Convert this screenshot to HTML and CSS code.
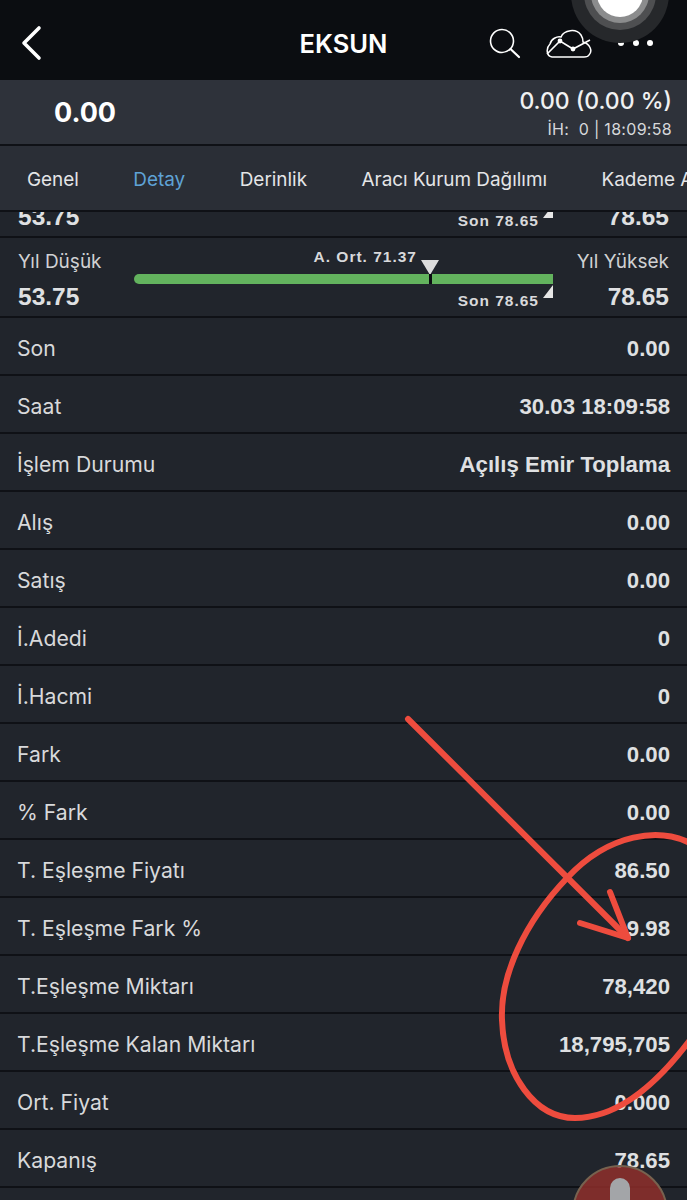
FILE: index.html
```html
<!DOCTYPE html>
<html lang="tr">
<head>
<meta charset="utf-8">
<title>EKSUN</title>
<link rel="stylesheet" href="styles.css">
</head>
<body>
<div class="screen">
  <header class="topbar">
    <svg class="back" width="24" height="36" viewBox="0 0 24 36"><path d="M19 3 L4 18 L19 33" fill="none" stroke="#fff" stroke-width="3.6" stroke-linecap="round" stroke-linejoin="round"/></svg>
    <h1 class="title">EKSUN</h1>
    <div class="actions">
      <svg width="34" height="32" viewBox="0 0 34 32"><circle cx="14" cy="13" r="11.5" fill="none" stroke="#fff" stroke-width="1.6"/><path d="M22.5 21 L31 29" stroke="#fff" stroke-width="2.2" stroke-linecap="round"/></svg>
      <svg width="46" height="32" viewBox="0 0 46 32"><path d="M6 29 C0 28 0 20 4 16 C5 11 11 8 15 9 C18 2 30 0 35 7 C37 10 37 12 37 14 C44 16 47 23 43 27 C42 29 40 29 38 29 Z" fill="none" stroke="#fff" stroke-width="1.5"/><path d="M1 26 L14 13 L27 21 L44 12" fill="none" stroke="#fff" stroke-width="1.6"/><circle cx="14" cy="13" r="2.4" fill="#fff"/><circle cx="27" cy="21" r="2.4" fill="#fff"/></svg>
      <div class="dots"><i></i><i></i><i></i></div>
    </div>
  </header>

  <section class="quote">
    <div class="price">0.00</div>
    <div class="quote-side">
      <div class="change">0.00 (0.00 %)</div>
      <div class="meta">İH:&nbsp; 0 | 18:09:58</div>
    </div>
  </section>

  <nav class="tabs">
    <span class="tab">Genel</span>
    <span class="tab active">Detay</span>
    <span class="tab">Derinlik</span>
    <span class="tab">Aracı Kurum Dağılımı</span>
    <span class="tab">Kademe Analizi</span>
  </nav>

  <main class="viewport">
    <div class="list">
      <div class="range">
        <div class="range-end"><span class="range-label"></span><b class="range-val">53.75</b></div>
        <div class="track">
          <span class="last">Son 78.65</span><span class="tri-corner"></span>
        </div>
        <div class="range-end right"><span class="range-label"></span><b class="range-val">78.65</b></div>
      </div>
      <div class="range">
        <div class="range-end"><span class="range-label">Yıl Düşük</span><b class="range-val">53.75</b></div>
        <div class="track">
          <span class="avg">A. Ort. 71.37</span><span class="tri-down"></span>
          <div class="bar"><span class="tick"></span></div>
          <span class="last">Son 78.65</span><span class="tri-corner"></span>
        </div>
        <div class="range-end right"><span class="range-label">Yıl Yüksek</span><b class="range-val">78.65</b></div>
      </div>
      <div class="row"><span>Son</span><b>0.00</b></div>
      <div class="row"><span>Saat</span><b>30.03 18:09:58</b></div>
      <div class="row"><span>İşlem Durumu</span><b>Açılış Emir Toplama</b></div>
      <div class="row"><span>Alış</span><b>0.00</b></div>
      <div class="row"><span>Satış</span><b>0.00</b></div>
      <div class="row"><span>İ.Adedi</span><b>0</b></div>
      <div class="row"><span>İ.Hacmi</span><b>0</b></div>
      <div class="row"><span>Fark</span><b>0.00</b></div>
      <div class="row"><span>% Fark</span><b>0.00</b></div>
      <div class="row"><span>T. Eşleşme Fiyatı</span><b>86.50</b></div>
      <div class="row"><span>T. Eşleşme Fark %</span><b>9.98</b></div>
      <div class="row"><span>T.Eşleşme Miktarı</span><b>78,420</b></div>
      <div class="row"><span>T.Eşleşme Kalan Miktarı</span><b>18,795,705</b></div>
      <div class="row"><span>Ort. Fiyat</span><b>0.000</b></div>
      <div class="row"><span>Kapanış</span><b>78.65</b></div>
    </div>
  </main>

  <svg class="touch" width="687" height="60" viewBox="0 0 687 60"><circle cx="620" cy="-6" r="49" fill="#26282b"/><circle cx="620" cy="-6" r="36" fill="#4e4f51"/><circle cx="620" cy="-6" r="29" fill="#8b8c8d"/><circle cx="620" cy="-6" r="23" fill="#fff"/></svg>

  <svg class="ink" width="687" height="1200" viewBox="0 0 687 1200">
    <g fill="none" stroke="#ee4c3e" stroke-linecap="round" stroke-linejoin="round">
      <path d="M408 719 L628 938" stroke-width="6"/>
      <path d="M610 892 L628 938 L580 923" stroke-width="6"/>
      <path d="M690 843 C660 828 610 832 567 878 C525 922 500 975 502 1020 C504 1075 535 1118 575 1118 C620 1118 660 1080 690 1040" stroke-width="6"/>
    </g>
  </svg>

  <div class="record"><span class="record-pill"></span></div>
</div>
</body>
</html>
```
FILE: styles.css
```css
* { box-sizing: border-box; }
html, body { margin: 0; padding: 0; background: #21252c; }
.screen {
  position: relative;
  width: 687px;
  height: 1200px;
  overflow: hidden;
  display: flex;
  flex-direction: column;
  font-family: "Inter", "Liberation Sans", sans-serif;
  color: #e6e7e9;
}

.topbar {
  position: relative;
  flex: 0 0 80px;
  background: #0b0d11;
  display: flex;
  align-items: center;
  padding: 8px 0 0 20px;
}
.back { display: block; margin-top: -2px; }
.title {
  position: absolute;
  left: 0;
  right: 0;
  top: 28px;
  margin: 0;
  text-align: center;
  font-size: 25.5px;
  line-height: 32px;
  font-weight: 600;
  color: #fff;
}
.actions {
  margin-left: auto;
  display: flex;
  align-items: center;
  gap: 24px;
  padding-right: 34px;
}
.actions svg { display: block; }
.dots { display: flex; gap: 8.5px; margin-left: 2px; margin-top: -2px; }
.dots i { width: 6px; height: 6px; border-radius: 50%; background: #fff; }

.quote {
  flex: 0 0 64px;
  background: #2e323a;
  display: flex;
  justify-content: space-between;
  padding: 8px 15px 0 54px;
}
.price { font-size: 27px; line-height: 50px; font-weight: 700; color: #fff; }
.quote-side { text-align: right; }
.change { font-size: 23px; line-height: 26px; font-weight: 500; color: #f0f1f2; }
.meta { font-size: 16px; line-height: 24px; letter-spacing: 0.3px; color: #d6d8da; margin-top: 3px; }

.tabs {
  flex: 0 0 68px;
  border-top: 2px solid #0f1116;
  border-bottom: 2px solid #0f1116;
  background: #2a2e36;
  display: flex;
  align-items: center;
  gap: 54.5px;
  padding: 3px 0 0 27px;
  white-space: nowrap;
  overflow: hidden;
  font-size: 18.9px;
  color: #e4e5e7;
}
.tab { flex: none; }
.tab.active { color: #5fa3d6; }

.viewport { flex: 1; min-height: 0; overflow: hidden; }
.list { margin-top: -54px; }

.row {
  height: 58px;
  border-bottom: 2px solid #0f1116;
  background: #21252c;
  display: flex;
  justify-content: space-between;
  align-items: center;
  padding: 4px 17px 0 17px;
  font-size: 21.2px;
  color: #d8d9db;
}
.row b {
  margin-top: 2px;
  font-family: "Liberation Sans", sans-serif;
  font-weight: 700;
  font-size: 22.2px;
  color: #dfe0e2;
}

.range {
  height: 80px;
  border-bottom: 2px solid #0f1116;
  background: #21252c;
  display: flex;
  justify-content: space-between;
  padding: 0 18px;
}
.range-end { width: 100px; display: flex; flex-direction: column; }
.range-end.right { text-align: right; }
.range-label { height: 24px; font-size: 19px; line-height: 24px; margin-top: 12px; color: #d0d1d3; white-space: nowrap; }
.range-end.right .range-label { direction: rtl; }
.range-val {
  font-family: "Liberation Sans", sans-serif;
  font-size: 24.5px;
  line-height: 26px;
  margin-top: 10px;
  color: #dfe0e2;
}
.track { position: relative; width: 419px; margin-left: 16px; margin-right: 16px; }
.bar {
  position: absolute;
  left: 0;
  right: 0;
  top: 36px;
  height: 10px;
  background: #63b35e;
  border-radius: 5px 0 0 5px;
}
.tick { position: absolute; left: 295px; top: 0; width: 3px; height: 10px; background: #0b0d11; }
.avg, .last {
  position: absolute;
  font-family: "Liberation Sans", sans-serif;
  font-size: 15.5px;
  font-weight: 700;
  letter-spacing: 1px;
  line-height: 18px;
  color: #d8d9db;
  white-space: nowrap;
}
.avg { right: 136px; top: 10px; }
.last { right: 14px; top: 54px; }
.tri-down {
  position: absolute;
  left: 287px;
  top: 22px;
  border-left: 9px solid transparent;
  border-right: 9px solid transparent;
  border-top: 15px solid #dcdcdc;
}
.tri-corner {
  position: absolute;
  right: 0;
  top: 47px;
  border-left: 10px solid transparent;
  border-bottom: 13px solid #e6e6e6;
}

.touch { position: absolute; left: 0; top: 0; }
.ink { position: absolute; left: 0; top: 0; pointer-events: none; }
.record {
  position: absolute;
  left: 572px;
  top: 1165px;
  width: 96px;
  height: 96px;
  border-radius: 50%;
  background: rgba(150, 48, 44, 0.8);
  border: 2px solid #77624f;
  display: flex;
  justify-content: center;
}
.record-pill {
  width: 20px;
  height: 60px;
  margin-top: 11px;
  border-radius: 10px;
  background: #a3a5a8;
}
```
